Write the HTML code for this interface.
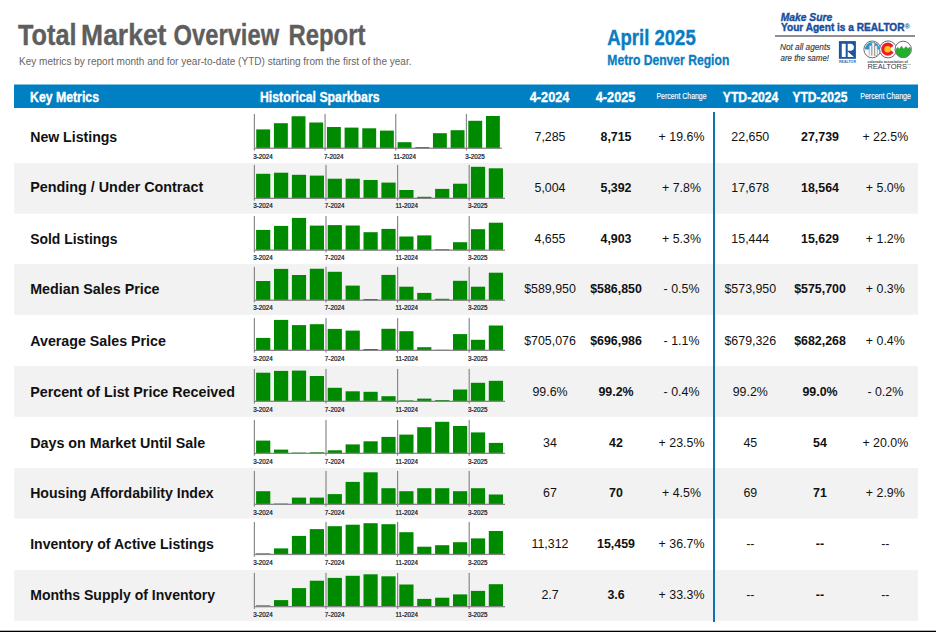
<!DOCTYPE html>
<html><head><meta charset="utf-8"><style>
html,body{margin:0;padding:0;background:#fff;}
body{width:936px;height:632px;overflow:hidden;position:relative;}
svg{position:absolute;left:0;top:0;font-family:"Liberation Sans", sans-serif;}
</style></head><body>
<svg width="936" height="632" viewBox="0 0 936 632">
<text x="17.99" y="45.1" font-size="29.8" fill="#5e5e5e" font-weight="bold" font-style="normal" text-anchor="start" textLength="58.56" lengthAdjust="spacingAndGlyphs" stroke="#5e5e5e" stroke-width="0.35">Total</text>
<text x="81.1" y="45.1" font-size="29.8" fill="#5e5e5e" font-weight="bold" font-style="normal" text-anchor="start" textLength="85.34" lengthAdjust="spacingAndGlyphs" stroke="#5e5e5e" stroke-width="0.35">Market</text>
<text x="173.6" y="45.1" font-size="29.8" fill="#5e5e5e" font-weight="bold" font-style="normal" text-anchor="start" textLength="105.48" lengthAdjust="spacingAndGlyphs" stroke="#5e5e5e" stroke-width="0.35">Overview</text>
<text x="288.47" y="45.1" font-size="29.8" fill="#5e5e5e" font-weight="bold" font-style="normal" text-anchor="start" textLength="76.94" lengthAdjust="spacingAndGlyphs" stroke="#5e5e5e" stroke-width="0.35">Report</text>
<text x="19" y="65.0" font-size="10" fill="#666666" font-weight="normal" font-style="normal" text-anchor="start" textLength="392.5" lengthAdjust="spacingAndGlyphs" >Key metrics by report month and for year-to-date (YTD) starting from the first of the year.</text>
<text x="607.2" y="44.7" font-size="22.8" fill="#0b7cc1" font-weight="bold" font-style="normal" text-anchor="start" textLength="88.5" lengthAdjust="spacingAndGlyphs" stroke="#0b7cc1" stroke-width="0.4">April 2025</text>
<text x="607.3" y="65.2" font-size="14.3" fill="#0b7cc1" font-weight="bold" font-style="normal" text-anchor="start" textLength="122" lengthAdjust="spacingAndGlyphs" stroke="#0b7cc1" stroke-width="0.3">Metro Denver Region</text>
<text x="780.7" y="20.8" font-size="10.8" fill="#184e9e" font-weight="bold" font-style="italic" text-anchor="start" textLength="51.5" lengthAdjust="spacingAndGlyphs" stroke="#184e9e" stroke-width="0.4">Make Sure</text>
<text x="781" y="30.6" font-size="10.2" fill="#184e9e" font-weight="bold" font-style="normal" text-anchor="start" textLength="123.5" lengthAdjust="spacingAndGlyphs" stroke="#184e9e" stroke-width="0.4">Your Agent is a REALTOR</text>
<text x="904.6" y="28.6" font-size="7.6" fill="#184e9e" font-weight="bold">®</text>
<rect x="775" y="35" width="140" height="2" fill="#8f8f8f"/>
<text x="780" y="49.7" font-size="8.2" fill="#3a3a3a" font-weight="normal" font-style="italic" text-anchor="start" textLength="50.3" lengthAdjust="spacingAndGlyphs" stroke="#3a3a3a" stroke-width="0.15">Not all agents</text>
<text x="780.5" y="61.2" font-size="8.2" fill="#3a3a3a" font-weight="normal" font-style="italic" text-anchor="start" textLength="48.5" lengthAdjust="spacingAndGlyphs" stroke="#3a3a3a" stroke-width="0.15">are the same!</text>
<rect x="838.9" y="41.1" width="17" height="17.7" fill="#1a55a0"/>
<path d="M841.75 43.8 h3.95 v13.25 h-3.95 z M847.7 43.8 H850.4 A3.5 3.5 0 0 1 850.4 50.8 H847.7 Z M847.7 51.4 L853.9 57.05 H847.7 Z" fill="#fff"/>
<text x="839" y="62.8" font-size="3.6" font-weight="bold" fill="#3a6ab0" textLength="17" lengthAdjust="spacingAndGlyphs">REALTOR</text>
<g>
<circle cx="872.3" cy="49.4" r="8.4" fill="#fff" stroke="#6a6a6a" stroke-width="1"/>
<path d="M865 49.4 A7.3 7.3 0 0 1 879.6 49.4 Z" fill="#2196d6"/>
<path d="M869.2 55.6 V45.5 h2.6 V55.6 M871.8 55.6 V42.6 h2.8 V55.6 M874.6 55.6 V45.8 h2.8 V55.6 z" fill="#f4f4f4" stroke="#888" stroke-width="0.6"/>
<circle cx="888.1" cy="49.4" r="8.5" fill="#fff" stroke="#6a6a6a" stroke-width="1"/>
<circle cx="887.8" cy="49.1" r="6.6" fill="#ec1c2c"/>
<path d="M889 49.1 L895.5 44.5 L895.5 53.7 z" fill="#fff"/>
<circle cx="887.6" cy="49.2" r="3.2" fill="#fcc60e"/>
<circle cx="903.2" cy="49.4" r="8.2" fill="#fff" stroke="#6a6a6a" stroke-width="1"/>
<path d="M895.6 49.6 L897.8 47.2 L899.4 48.9 L901.6 46.0 L903.6 48.9 L906 46.4 L908 48.6 L909.6 46.9 L910.9 48.9 L910.9 50 A7.7 7.7 0 0 1 895.5 50 Z" fill="#22b02c" stroke="#777" stroke-width="0.4"/>
</g>
<text x="867.4" y="62.6" font-size="3.2" font-weight="bold" fill="#444" textLength="40.5" lengthAdjust="spacingAndGlyphs">colorado association of</text>
<text x="867.4" y="68.9" font-size="6.4" fill="#3a3a3a" textLength="39.6" lengthAdjust="spacingAndGlyphs">REALTORS</text>
<text x="907.2" y="65" font-size="2.5" fill="#555">TM</text>
<rect x="14" y="84.5" width="904" height="23.5" fill="#0080c2"/>
<text x="30" y="101.6" font-size="15" fill="#fff" font-weight="bold" font-style="normal" text-anchor="start" textLength="69" lengthAdjust="spacingAndGlyphs" stroke="#fff" stroke-width="0.35">Key Metrics</text>
<text x="260" y="101.6" font-size="15" fill="#fff" font-weight="bold" font-style="normal" text-anchor="start" textLength="119.5" lengthAdjust="spacingAndGlyphs" stroke="#fff" stroke-width="0.35">Historical Sparkbars</text>
<text x="529.8" y="101.6" font-size="15" fill="#fff" font-weight="bold" font-style="normal" text-anchor="start" textLength="39.5" lengthAdjust="spacingAndGlyphs" stroke="#fff" stroke-width="0.35">4-2024</text>
<text x="595.8" y="101.6" font-size="15" fill="#fff" font-weight="bold" font-style="normal" text-anchor="start" textLength="39.5" lengthAdjust="spacingAndGlyphs" stroke="#fff" stroke-width="0.35">4-2025</text>
<text x="656.4" y="98.6" font-size="9.7" fill="#fff" font-weight="normal" font-style="normal" text-anchor="start" textLength="50.2" lengthAdjust="spacingAndGlyphs" stroke="#fff" stroke-width="0.15">Percent Change</text>
<text x="722.8" y="101.6" font-size="15" fill="#fff" font-weight="bold" font-style="normal" text-anchor="start" textLength="55.5" lengthAdjust="spacingAndGlyphs" stroke="#fff" stroke-width="0.35">YTD-2024</text>
<text x="792.4" y="101.6" font-size="15" fill="#fff" font-weight="bold" font-style="normal" text-anchor="start" textLength="55" lengthAdjust="spacingAndGlyphs" stroke="#fff" stroke-width="0.35">YTD-2025</text>
<text x="860.3" y="98.6" font-size="9.7" fill="#fff" font-weight="normal" font-style="normal" text-anchor="start" textLength="50.6" lengthAdjust="spacingAndGlyphs" stroke="#fff" stroke-width="0.15">Percent Change</text>
<rect x="14.2" y="163" width="903.8" height="50.7" fill="#f2f2f2"/>
<rect x="14.2" y="264.1" width="903.8" height="50.7" fill="#f2f2f2"/>
<rect x="14.2" y="366" width="903.8" height="50.8" fill="#f2f2f2"/>
<rect x="14.2" y="468" width="903.8" height="50.6" fill="#f2f2f2"/>
<rect x="14.2" y="570" width="903.8" height="50.8" fill="#f2f2f2"/>
<text x="30.2" y="141.7" font-size="14" fill="#111" font-weight="bold" font-style="normal" text-anchor="start" textLength="87.05" lengthAdjust="spacingAndGlyphs" >New Listings</text>
<text x="550" y="141.0" font-size="12.4" fill="#111" font-weight="normal" font-style="normal" text-anchor="middle" >7,285</text>
<text x="616" y="141.0" font-size="12.4" fill="#111" font-weight="bold" font-style="normal" text-anchor="middle" >8,715</text>
<text x="681.5" y="141.0" font-size="12.4" fill="#111" font-weight="normal" font-style="normal" text-anchor="middle" >+ 19.6%</text>
<text x="750.3" y="141.0" font-size="12.4" fill="#111" font-weight="normal" font-style="normal" text-anchor="middle" >22,650</text>
<text x="820" y="141.0" font-size="12.4" fill="#111" font-weight="bold" font-style="normal" text-anchor="middle" >27,739</text>
<text x="885.3" y="141.0" font-size="12.4" fill="#111" font-weight="normal" font-style="normal" text-anchor="middle" >+ 22.5%</text>
<rect x="256.25" y="129.40" width="13.90" height="18.90" fill="#008a00"/>
<rect x="273.92" y="123.20" width="13.90" height="25.10" fill="#008a00"/>
<rect x="291.59" y="116.25" width="13.90" height="32.05" fill="#008a00"/>
<rect x="309.26" y="122.50" width="13.90" height="25.80" fill="#008a00"/>
<rect x="326.93" y="127.00" width="13.90" height="21.30" fill="#008a00"/>
<rect x="344.60" y="127.60" width="13.90" height="20.70" fill="#008a00"/>
<rect x="362.27" y="128.30" width="13.90" height="20.00" fill="#008a00"/>
<rect x="379.94" y="130.60" width="13.90" height="17.70" fill="#008a00"/>
<rect x="397.61" y="142.20" width="13.90" height="6.10" fill="#008a00"/>
<rect x="415.28" y="147.10" width="13.90" height="1.20" fill="#008a00"/>
<rect x="432.95" y="133.20" width="13.90" height="15.10" fill="#008a00"/>
<rect x="450.62" y="130.20" width="13.90" height="18.10" fill="#008a00"/>
<rect x="468.29" y="120.80" width="13.90" height="27.50" fill="#008a00"/>
<rect x="485.96" y="116.00" width="13.90" height="32.30" fill="#008a00"/>
<rect x="253.90" y="147.60" width="247.88" height="1.3" fill="#858585"/>
<rect x="253.80" y="113.90" width="1.2" height="36.60" fill="#8a8a8a"/>
<rect x="324.48" y="113.90" width="1.2" height="36.60" fill="#8a8a8a"/>
<rect x="395.16" y="113.90" width="1.2" height="36.60" fill="#8a8a8a"/>
<rect x="465.84" y="113.90" width="1.2" height="36.60" fill="#8a8a8a"/>
<text x="253.20" y="158.70" font-size="6.6" fill="#15151f" stroke="#15151f" stroke-width="0.22" textLength="19.6" lengthAdjust="spacingAndGlyphs">3-2024</text>
<text x="323.88" y="158.70" font-size="6.6" fill="#15151f" stroke="#15151f" stroke-width="0.22" textLength="19.6" lengthAdjust="spacingAndGlyphs">7-2024</text>
<text x="393.56" y="158.70" font-size="6.6" fill="#15151f" stroke="#15151f" stroke-width="0.22" textLength="22.5" lengthAdjust="spacingAndGlyphs">11-2024</text>
<text x="465.24" y="158.70" font-size="6.6" fill="#15151f" stroke="#15151f" stroke-width="0.22" textLength="19.6" lengthAdjust="spacingAndGlyphs">3-2025</text>
<text x="30.2" y="192.4" font-size="14" fill="#111" font-weight="bold" font-style="normal" text-anchor="start" textLength="173.02" lengthAdjust="spacingAndGlyphs" >Pending / Under Contract</text>
<text x="550" y="191.70000000000002" font-size="12.4" fill="#111" font-weight="normal" font-style="normal" text-anchor="middle" >5,004</text>
<text x="616" y="191.70000000000002" font-size="12.4" fill="#111" font-weight="bold" font-style="normal" text-anchor="middle" >5,392</text>
<text x="681.5" y="191.70000000000002" font-size="12.4" fill="#111" font-weight="normal" font-style="normal" text-anchor="middle" >+ 7.8%</text>
<text x="750.3" y="191.70000000000002" font-size="12.4" fill="#111" font-weight="normal" font-style="normal" text-anchor="middle" >17,678</text>
<text x="820" y="191.70000000000002" font-size="12.4" fill="#111" font-weight="bold" font-style="normal" text-anchor="middle" >18,564</text>
<text x="885.3" y="191.70000000000002" font-size="12.4" fill="#111" font-weight="normal" font-style="normal" text-anchor="middle" >+ 5.0%</text>
<rect x="256.10" y="173.80" width="14.20" height="24.60" fill="#008a00"/>
<rect x="274.00" y="172.70" width="14.20" height="25.70" fill="#008a00"/>
<rect x="291.90" y="174.80" width="14.20" height="23.60" fill="#008a00"/>
<rect x="309.80" y="175.60" width="14.20" height="22.80" fill="#008a00"/>
<rect x="327.70" y="178.70" width="14.20" height="19.70" fill="#008a00"/>
<rect x="345.60" y="178.70" width="14.20" height="19.70" fill="#008a00"/>
<rect x="363.50" y="180.00" width="14.20" height="18.40" fill="#008a00"/>
<rect x="381.40" y="182.60" width="14.20" height="15.80" fill="#008a00"/>
<rect x="399.30" y="190.00" width="14.20" height="8.40" fill="#008a00"/>
<rect x="417.20" y="196.80" width="14.20" height="1.60" fill="#008a00"/>
<rect x="435.10" y="188.90" width="14.20" height="9.50" fill="#008a00"/>
<rect x="453.00" y="183.70" width="14.20" height="14.70" fill="#008a00"/>
<rect x="470.90" y="166.80" width="14.20" height="31.60" fill="#008a00"/>
<rect x="488.80" y="168.30" width="14.20" height="30.10" fill="#008a00"/>
<rect x="253.90" y="197.70" width="251.10" height="1.3" fill="#858585"/>
<rect x="253.80" y="164.90" width="1.2" height="35.70" fill="#8a8a8a"/>
<rect x="325.40" y="164.90" width="1.2" height="35.70" fill="#8a8a8a"/>
<rect x="397.00" y="164.90" width="1.2" height="35.70" fill="#8a8a8a"/>
<rect x="468.60" y="164.90" width="1.2" height="35.70" fill="#8a8a8a"/>
<text x="253.20" y="207.60" font-size="6.6" fill="#15151f" stroke="#15151f" stroke-width="0.22" textLength="19.6" lengthAdjust="spacingAndGlyphs">3-2024</text>
<text x="324.80" y="207.60" font-size="6.6" fill="#15151f" stroke="#15151f" stroke-width="0.22" textLength="19.6" lengthAdjust="spacingAndGlyphs">7-2024</text>
<text x="395.40" y="207.60" font-size="6.6" fill="#15151f" stroke="#15151f" stroke-width="0.22" textLength="22.5" lengthAdjust="spacingAndGlyphs">11-2024</text>
<text x="468.00" y="207.60" font-size="6.6" fill="#15151f" stroke="#15151f" stroke-width="0.22" textLength="19.6" lengthAdjust="spacingAndGlyphs">3-2025</text>
<text x="30.2" y="243.5" font-size="14" fill="#111" font-weight="bold" font-style="normal" text-anchor="start" textLength="87.27" lengthAdjust="spacingAndGlyphs" >Sold Listings</text>
<text x="550" y="242.8" font-size="12.4" fill="#111" font-weight="normal" font-style="normal" text-anchor="middle" >4,655</text>
<text x="616" y="242.8" font-size="12.4" fill="#111" font-weight="bold" font-style="normal" text-anchor="middle" >4,903</text>
<text x="681.5" y="242.8" font-size="12.4" fill="#111" font-weight="normal" font-style="normal" text-anchor="middle" >+ 5.3%</text>
<text x="750.3" y="242.8" font-size="12.4" fill="#111" font-weight="normal" font-style="normal" text-anchor="middle" >15,444</text>
<text x="820" y="242.8" font-size="12.4" fill="#111" font-weight="bold" font-style="normal" text-anchor="middle" >15,629</text>
<text x="885.3" y="242.8" font-size="12.4" fill="#111" font-weight="normal" font-style="normal" text-anchor="middle" >+ 1.2%</text>
<rect x="256.10" y="229.90" width="14.20" height="20.30" fill="#008a00"/>
<rect x="274.00" y="225.90" width="14.20" height="24.30" fill="#008a00"/>
<rect x="291.90" y="217.90" width="14.20" height="32.30" fill="#008a00"/>
<rect x="309.80" y="225.60" width="14.20" height="24.60" fill="#008a00"/>
<rect x="327.70" y="225.10" width="14.20" height="25.10" fill="#008a00"/>
<rect x="345.60" y="225.50" width="14.20" height="24.70" fill="#008a00"/>
<rect x="363.50" y="232.20" width="14.20" height="18.00" fill="#008a00"/>
<rect x="381.40" y="228.90" width="14.20" height="21.30" fill="#008a00"/>
<rect x="399.30" y="236.50" width="14.20" height="13.70" fill="#008a00"/>
<rect x="417.20" y="235.40" width="14.20" height="14.80" fill="#008a00"/>
<rect x="435.10" y="249.20" width="14.20" height="1.00" fill="#008a00"/>
<rect x="453.00" y="242.20" width="14.20" height="8.00" fill="#008a00"/>
<rect x="470.90" y="229.20" width="14.20" height="21.00" fill="#008a00"/>
<rect x="488.80" y="222.70" width="14.20" height="27.50" fill="#008a00"/>
<rect x="253.90" y="249.50" width="251.10" height="1.3" fill="#858585"/>
<rect x="253.80" y="215.90" width="1.2" height="36.50" fill="#8a8a8a"/>
<rect x="325.40" y="215.90" width="1.2" height="36.50" fill="#8a8a8a"/>
<rect x="397.00" y="215.90" width="1.2" height="36.50" fill="#8a8a8a"/>
<rect x="468.60" y="215.90" width="1.2" height="36.50" fill="#8a8a8a"/>
<text x="253.20" y="259.70" font-size="6.6" fill="#15151f" stroke="#15151f" stroke-width="0.22" textLength="19.6" lengthAdjust="spacingAndGlyphs">3-2024</text>
<text x="324.80" y="259.70" font-size="6.6" fill="#15151f" stroke="#15151f" stroke-width="0.22" textLength="19.6" lengthAdjust="spacingAndGlyphs">7-2024</text>
<text x="395.40" y="259.70" font-size="6.6" fill="#15151f" stroke="#15151f" stroke-width="0.22" textLength="22.5" lengthAdjust="spacingAndGlyphs">11-2024</text>
<text x="468.00" y="259.70" font-size="6.6" fill="#15151f" stroke="#15151f" stroke-width="0.22" textLength="19.6" lengthAdjust="spacingAndGlyphs">3-2025</text>
<text x="30.2" y="294.1" font-size="14" fill="#111" font-weight="bold" font-style="normal" text-anchor="start" textLength="129.38" lengthAdjust="spacingAndGlyphs" >Median Sales Price</text>
<text x="550" y="293.40000000000003" font-size="12.4" fill="#111" font-weight="normal" font-style="normal" text-anchor="middle" >$589,950</text>
<text x="616" y="293.40000000000003" font-size="12.4" fill="#111" font-weight="bold" font-style="normal" text-anchor="middle" >$586,850</text>
<text x="681.5" y="293.40000000000003" font-size="12.4" fill="#111" font-weight="normal" font-style="normal" text-anchor="middle" >- 0.5%</text>
<text x="750.3" y="293.40000000000003" font-size="12.4" fill="#111" font-weight="normal" font-style="normal" text-anchor="middle" >$573,950</text>
<text x="820" y="293.40000000000003" font-size="12.4" fill="#111" font-weight="bold" font-style="normal" text-anchor="middle" >$575,700</text>
<text x="885.3" y="293.40000000000003" font-size="12.4" fill="#111" font-weight="normal" font-style="normal" text-anchor="middle" >+ 0.3%</text>
<rect x="256.10" y="281.00" width="14.20" height="19.30" fill="#008a00"/>
<rect x="274.00" y="268.90" width="14.20" height="31.40" fill="#008a00"/>
<rect x="291.90" y="275.00" width="14.20" height="25.30" fill="#008a00"/>
<rect x="309.80" y="268.75" width="14.20" height="31.55" fill="#008a00"/>
<rect x="327.70" y="271.80" width="14.20" height="28.50" fill="#008a00"/>
<rect x="345.60" y="285.60" width="14.20" height="14.70" fill="#008a00"/>
<rect x="363.50" y="299.00" width="14.20" height="1.30" fill="#008a00"/>
<rect x="381.40" y="274.90" width="14.20" height="25.40" fill="#008a00"/>
<rect x="399.30" y="286.70" width="14.20" height="13.60" fill="#008a00"/>
<rect x="417.20" y="292.90" width="14.20" height="7.40" fill="#008a00"/>
<rect x="435.10" y="298.80" width="14.20" height="1.50" fill="#008a00"/>
<rect x="453.00" y="280.80" width="14.20" height="19.50" fill="#008a00"/>
<rect x="470.90" y="286.70" width="14.20" height="13.60" fill="#008a00"/>
<rect x="488.80" y="272.70" width="14.20" height="27.60" fill="#008a00"/>
<rect x="253.90" y="299.60" width="251.10" height="1.3" fill="#858585"/>
<rect x="253.80" y="266.90" width="1.2" height="35.60" fill="#8a8a8a"/>
<rect x="325.40" y="266.90" width="1.2" height="35.60" fill="#8a8a8a"/>
<rect x="397.00" y="266.90" width="1.2" height="35.60" fill="#8a8a8a"/>
<rect x="468.60" y="266.90" width="1.2" height="35.60" fill="#8a8a8a"/>
<text x="253.20" y="309.60" font-size="6.6" fill="#15151f" stroke="#15151f" stroke-width="0.22" textLength="19.6" lengthAdjust="spacingAndGlyphs">3-2024</text>
<text x="324.80" y="309.60" font-size="6.6" fill="#15151f" stroke="#15151f" stroke-width="0.22" textLength="19.6" lengthAdjust="spacingAndGlyphs">7-2024</text>
<text x="395.40" y="309.60" font-size="6.6" fill="#15151f" stroke="#15151f" stroke-width="0.22" textLength="22.5" lengthAdjust="spacingAndGlyphs">11-2024</text>
<text x="468.00" y="309.60" font-size="6.6" fill="#15151f" stroke="#15151f" stroke-width="0.22" textLength="19.6" lengthAdjust="spacingAndGlyphs">3-2025</text>
<text x="30.2" y="345.5" font-size="14" fill="#111" font-weight="bold" font-style="normal" text-anchor="start" textLength="135.76" lengthAdjust="spacingAndGlyphs" >Average Sales Price</text>
<text x="550" y="344.8" font-size="12.4" fill="#111" font-weight="normal" font-style="normal" text-anchor="middle" >$705,076</text>
<text x="616" y="344.8" font-size="12.4" fill="#111" font-weight="bold" font-style="normal" text-anchor="middle" >$696,986</text>
<text x="681.5" y="344.8" font-size="12.4" fill="#111" font-weight="normal" font-style="normal" text-anchor="middle" >- 1.1%</text>
<text x="750.3" y="344.8" font-size="12.4" fill="#111" font-weight="normal" font-style="normal" text-anchor="middle" >$679,326</text>
<text x="820" y="344.8" font-size="12.4" fill="#111" font-weight="bold" font-style="normal" text-anchor="middle" >$682,268</text>
<text x="885.3" y="344.8" font-size="12.4" fill="#111" font-weight="normal" font-style="normal" text-anchor="middle" >+ 0.4%</text>
<rect x="256.10" y="337.90" width="14.20" height="12.50" fill="#008a00"/>
<rect x="274.00" y="319.90" width="14.20" height="30.50" fill="#008a00"/>
<rect x="291.90" y="325.10" width="14.20" height="25.30" fill="#008a00"/>
<rect x="309.80" y="324.20" width="14.20" height="26.20" fill="#008a00"/>
<rect x="327.70" y="328.90" width="14.20" height="21.50" fill="#008a00"/>
<rect x="345.60" y="330.60" width="14.20" height="19.80" fill="#008a00"/>
<rect x="363.50" y="349.00" width="14.20" height="1.40" fill="#008a00"/>
<rect x="381.40" y="328.80" width="14.20" height="21.60" fill="#008a00"/>
<rect x="399.30" y="331.20" width="14.20" height="19.20" fill="#008a00"/>
<rect x="417.20" y="347.20" width="14.20" height="3.20" fill="#008a00"/>
<rect x="435.10" y="349.80" width="14.20" height="0.60" fill="#008a00"/>
<rect x="453.00" y="334.10" width="14.20" height="16.30" fill="#008a00"/>
<rect x="470.90" y="339.80" width="14.20" height="10.60" fill="#008a00"/>
<rect x="488.80" y="325.50" width="14.20" height="24.90" fill="#008a00"/>
<rect x="253.90" y="349.70" width="251.10" height="1.3" fill="#858585"/>
<rect x="253.80" y="318.00" width="1.2" height="34.60" fill="#8a8a8a"/>
<rect x="325.40" y="318.00" width="1.2" height="34.60" fill="#8a8a8a"/>
<rect x="397.00" y="318.00" width="1.2" height="34.60" fill="#8a8a8a"/>
<rect x="468.60" y="318.00" width="1.2" height="34.60" fill="#8a8a8a"/>
<text x="253.20" y="360.90" font-size="6.6" fill="#15151f" stroke="#15151f" stroke-width="0.22" textLength="19.6" lengthAdjust="spacingAndGlyphs">3-2024</text>
<text x="324.80" y="360.90" font-size="6.6" fill="#15151f" stroke="#15151f" stroke-width="0.22" textLength="19.6" lengthAdjust="spacingAndGlyphs">7-2024</text>
<text x="395.40" y="360.90" font-size="6.6" fill="#15151f" stroke="#15151f" stroke-width="0.22" textLength="22.5" lengthAdjust="spacingAndGlyphs">11-2024</text>
<text x="468.00" y="360.90" font-size="6.6" fill="#15151f" stroke="#15151f" stroke-width="0.22" textLength="19.6" lengthAdjust="spacingAndGlyphs">3-2025</text>
<text x="30.2" y="396.7" font-size="14" fill="#111" font-weight="bold" font-style="normal" text-anchor="start" textLength="204.79" lengthAdjust="spacingAndGlyphs" >Percent of List Price Received</text>
<text x="550" y="396.0" font-size="12.4" fill="#111" font-weight="normal" font-style="normal" text-anchor="middle" >99.6%</text>
<text x="616" y="396.0" font-size="12.4" fill="#111" font-weight="bold" font-style="normal" text-anchor="middle" >99.2%</text>
<text x="681.5" y="396.0" font-size="12.4" fill="#111" font-weight="normal" font-style="normal" text-anchor="middle" >- 0.4%</text>
<text x="750.3" y="396.0" font-size="12.4" fill="#111" font-weight="normal" font-style="normal" text-anchor="middle" >99.2%</text>
<text x="820" y="396.0" font-size="12.4" fill="#111" font-weight="bold" font-style="normal" text-anchor="middle" >99.0%</text>
<text x="885.3" y="396.0" font-size="12.4" fill="#111" font-weight="normal" font-style="normal" text-anchor="middle" >- 0.2%</text>
<rect x="256.10" y="372.70" width="14.20" height="28.70" fill="#008a00"/>
<rect x="274.00" y="370.90" width="14.20" height="30.50" fill="#008a00"/>
<rect x="291.90" y="370.60" width="14.20" height="30.80" fill="#008a00"/>
<rect x="309.80" y="376.00" width="14.20" height="25.40" fill="#008a00"/>
<rect x="327.70" y="387.80" width="14.20" height="13.60" fill="#008a00"/>
<rect x="345.60" y="391.30" width="14.20" height="10.10" fill="#008a00"/>
<rect x="363.50" y="391.80" width="14.20" height="9.60" fill="#008a00"/>
<rect x="381.40" y="396.20" width="14.20" height="5.20" fill="#008a00"/>
<rect x="399.30" y="400.40" width="14.20" height="1.00" fill="#008a00"/>
<rect x="417.20" y="398.60" width="14.20" height="2.80" fill="#008a00"/>
<rect x="435.10" y="400.10" width="14.20" height="1.30" fill="#008a00"/>
<rect x="453.00" y="389.50" width="14.20" height="11.90" fill="#008a00"/>
<rect x="470.90" y="382.80" width="14.20" height="18.60" fill="#008a00"/>
<rect x="488.80" y="380.80" width="14.20" height="20.60" fill="#008a00"/>
<rect x="253.90" y="400.70" width="251.10" height="1.3" fill="#858585"/>
<rect x="253.80" y="368.90" width="1.2" height="34.70" fill="#8a8a8a"/>
<rect x="325.40" y="368.90" width="1.2" height="34.70" fill="#8a8a8a"/>
<rect x="397.00" y="368.90" width="1.2" height="34.70" fill="#8a8a8a"/>
<rect x="468.60" y="368.90" width="1.2" height="34.70" fill="#8a8a8a"/>
<text x="253.20" y="411.60" font-size="6.6" fill="#15151f" stroke="#15151f" stroke-width="0.22" textLength="19.6" lengthAdjust="spacingAndGlyphs">3-2024</text>
<text x="324.80" y="411.60" font-size="6.6" fill="#15151f" stroke="#15151f" stroke-width="0.22" textLength="19.6" lengthAdjust="spacingAndGlyphs">7-2024</text>
<text x="395.40" y="411.60" font-size="6.6" fill="#15151f" stroke="#15151f" stroke-width="0.22" textLength="22.5" lengthAdjust="spacingAndGlyphs">11-2024</text>
<text x="468.00" y="411.60" font-size="6.6" fill="#15151f" stroke="#15151f" stroke-width="0.22" textLength="19.6" lengthAdjust="spacingAndGlyphs">3-2025</text>
<text x="30.2" y="447.7" font-size="14" fill="#111" font-weight="bold" font-style="normal" text-anchor="start" textLength="174.94" lengthAdjust="spacingAndGlyphs" >Days on Market Until Sale</text>
<text x="550" y="447.0" font-size="12.4" fill="#111" font-weight="normal" font-style="normal" text-anchor="middle" >34</text>
<text x="616" y="447.0" font-size="12.4" fill="#111" font-weight="bold" font-style="normal" text-anchor="middle" >42</text>
<text x="681.5" y="447.0" font-size="12.4" fill="#111" font-weight="normal" font-style="normal" text-anchor="middle" >+ 23.5%</text>
<text x="750.3" y="447.0" font-size="12.4" fill="#111" font-weight="normal" font-style="normal" text-anchor="middle" >45</text>
<text x="820" y="447.0" font-size="12.4" fill="#111" font-weight="bold" font-style="normal" text-anchor="middle" >54</text>
<text x="885.3" y="447.0" font-size="12.4" fill="#111" font-weight="normal" font-style="normal" text-anchor="middle" >+ 20.0%</text>
<rect x="256.10" y="440.60" width="14.20" height="12.80" fill="#008a00"/>
<rect x="274.00" y="449.60" width="14.20" height="3.80" fill="#008a00"/>
<rect x="291.90" y="452.60" width="14.20" height="0.80" fill="#008a00"/>
<rect x="309.80" y="452.30" width="14.20" height="1.10" fill="#008a00"/>
<rect x="327.70" y="450.30" width="14.20" height="3.10" fill="#008a00"/>
<rect x="345.60" y="444.40" width="14.20" height="9.00" fill="#008a00"/>
<rect x="363.50" y="441.30" width="14.20" height="12.10" fill="#008a00"/>
<rect x="381.40" y="436.90" width="14.20" height="16.50" fill="#008a00"/>
<rect x="399.30" y="434.60" width="14.20" height="18.80" fill="#008a00"/>
<rect x="417.20" y="427.20" width="14.20" height="26.20" fill="#008a00"/>
<rect x="435.10" y="421.80" width="14.20" height="31.60" fill="#008a00"/>
<rect x="453.00" y="426.00" width="14.20" height="27.40" fill="#008a00"/>
<rect x="470.90" y="432.40" width="14.20" height="21.00" fill="#008a00"/>
<rect x="488.80" y="442.90" width="14.20" height="10.50" fill="#008a00"/>
<rect x="253.90" y="452.70" width="251.10" height="1.3" fill="#858585"/>
<rect x="253.80" y="419.90" width="1.2" height="35.70" fill="#8a8a8a"/>
<rect x="325.40" y="419.90" width="1.2" height="35.70" fill="#8a8a8a"/>
<rect x="397.00" y="419.90" width="1.2" height="35.70" fill="#8a8a8a"/>
<rect x="468.60" y="419.90" width="1.2" height="35.70" fill="#8a8a8a"/>
<text x="253.20" y="463.70" font-size="6.6" fill="#15151f" stroke="#15151f" stroke-width="0.22" textLength="19.6" lengthAdjust="spacingAndGlyphs">3-2024</text>
<text x="324.80" y="463.70" font-size="6.6" fill="#15151f" stroke="#15151f" stroke-width="0.22" textLength="19.6" lengthAdjust="spacingAndGlyphs">7-2024</text>
<text x="395.40" y="463.70" font-size="6.6" fill="#15151f" stroke="#15151f" stroke-width="0.22" textLength="22.5" lengthAdjust="spacingAndGlyphs">11-2024</text>
<text x="468.00" y="463.70" font-size="6.6" fill="#15151f" stroke="#15151f" stroke-width="0.22" textLength="19.6" lengthAdjust="spacingAndGlyphs">3-2025</text>
<text x="30.2" y="497.9" font-size="14" fill="#111" font-weight="bold" font-style="normal" text-anchor="start" textLength="183.36" lengthAdjust="spacingAndGlyphs" >Housing Affordability Index</text>
<text x="550" y="497.2" font-size="12.4" fill="#111" font-weight="normal" font-style="normal" text-anchor="middle" >67</text>
<text x="616" y="497.2" font-size="12.4" fill="#111" font-weight="bold" font-style="normal" text-anchor="middle" >70</text>
<text x="681.5" y="497.2" font-size="12.4" fill="#111" font-weight="normal" font-style="normal" text-anchor="middle" >+ 4.5%</text>
<text x="750.3" y="497.2" font-size="12.4" fill="#111" font-weight="normal" font-style="normal" text-anchor="middle" >69</text>
<text x="820" y="497.2" font-size="12.4" fill="#111" font-weight="bold" font-style="normal" text-anchor="middle" >71</text>
<text x="885.3" y="497.2" font-size="12.4" fill="#111" font-weight="normal" font-style="normal" text-anchor="middle" >+ 2.9%</text>
<rect x="256.10" y="491.20" width="14.20" height="13.20" fill="#008a00"/>
<rect x="274.00" y="503.60" width="14.20" height="0.80" fill="#008a00"/>
<rect x="291.90" y="497.60" width="14.20" height="6.80" fill="#008a00"/>
<rect x="309.80" y="497.60" width="14.20" height="6.80" fill="#008a00"/>
<rect x="327.70" y="494.10" width="14.20" height="10.30" fill="#008a00"/>
<rect x="345.60" y="481.90" width="14.20" height="22.50" fill="#008a00"/>
<rect x="363.50" y="472.30" width="14.20" height="32.10" fill="#008a00"/>
<rect x="381.40" y="488.20" width="14.20" height="16.20" fill="#008a00"/>
<rect x="399.30" y="491.20" width="14.20" height="13.20" fill="#008a00"/>
<rect x="417.20" y="488.20" width="14.20" height="16.20" fill="#008a00"/>
<rect x="435.10" y="488.20" width="14.20" height="16.20" fill="#008a00"/>
<rect x="453.00" y="491.20" width="14.20" height="13.20" fill="#008a00"/>
<rect x="470.90" y="488.20" width="14.20" height="16.20" fill="#008a00"/>
<rect x="488.80" y="494.50" width="14.20" height="9.90" fill="#008a00"/>
<rect x="253.90" y="503.70" width="251.10" height="1.3" fill="#858585"/>
<rect x="253.80" y="470.90" width="1.2" height="35.70" fill="#8a8a8a"/>
<rect x="325.40" y="470.90" width="1.2" height="35.70" fill="#8a8a8a"/>
<rect x="397.00" y="470.90" width="1.2" height="35.70" fill="#8a8a8a"/>
<rect x="468.60" y="470.90" width="1.2" height="35.70" fill="#8a8a8a"/>
<text x="253.20" y="514.70" font-size="6.6" fill="#15151f" stroke="#15151f" stroke-width="0.22" textLength="19.6" lengthAdjust="spacingAndGlyphs">3-2024</text>
<text x="324.80" y="514.70" font-size="6.6" fill="#15151f" stroke="#15151f" stroke-width="0.22" textLength="19.6" lengthAdjust="spacingAndGlyphs">7-2024</text>
<text x="395.40" y="514.70" font-size="6.6" fill="#15151f" stroke="#15151f" stroke-width="0.22" textLength="22.5" lengthAdjust="spacingAndGlyphs">11-2024</text>
<text x="468.00" y="514.70" font-size="6.6" fill="#15151f" stroke="#15151f" stroke-width="0.22" textLength="19.6" lengthAdjust="spacingAndGlyphs">3-2025</text>
<text x="30.2" y="548.9" font-size="14" fill="#111" font-weight="bold" font-style="normal" text-anchor="start" textLength="183.63" lengthAdjust="spacingAndGlyphs" >Inventory of Active Listings</text>
<text x="550" y="548.1999999999999" font-size="12.4" fill="#111" font-weight="normal" font-style="normal" text-anchor="middle" >11,312</text>
<text x="616" y="548.1999999999999" font-size="12.4" fill="#111" font-weight="bold" font-style="normal" text-anchor="middle" >15,459</text>
<text x="681.5" y="548.1999999999999" font-size="12.4" fill="#111" font-weight="normal" font-style="normal" text-anchor="middle" >+ 36.7%</text>
<text x="750.3" y="548.1999999999999" font-size="12.4" fill="#111" font-weight="normal" font-style="normal" text-anchor="middle" >--</text>
<text x="820" y="548.1999999999999" font-size="12.4" fill="#111" font-weight="bold" font-style="normal" text-anchor="middle" >--</text>
<text x="885.3" y="548.1999999999999" font-size="12.4" fill="#111" font-weight="normal" font-style="normal" text-anchor="middle" >--</text>
<rect x="256.10" y="553.40" width="14.20" height="1.10" fill="#008a00"/>
<rect x="274.00" y="548.40" width="14.20" height="6.10" fill="#008a00"/>
<rect x="291.90" y="535.90" width="14.20" height="18.60" fill="#008a00"/>
<rect x="309.80" y="529.10" width="14.20" height="25.40" fill="#008a00"/>
<rect x="327.70" y="526.20" width="14.20" height="28.30" fill="#008a00"/>
<rect x="345.60" y="524.70" width="14.20" height="29.80" fill="#008a00"/>
<rect x="363.50" y="523.20" width="14.20" height="31.30" fill="#008a00"/>
<rect x="381.40" y="524.20" width="14.20" height="30.30" fill="#008a00"/>
<rect x="399.30" y="532.20" width="14.20" height="22.30" fill="#008a00"/>
<rect x="417.20" y="546.70" width="14.20" height="7.80" fill="#008a00"/>
<rect x="435.10" y="545.20" width="14.20" height="9.30" fill="#008a00"/>
<rect x="453.00" y="542.20" width="14.20" height="12.30" fill="#008a00"/>
<rect x="470.90" y="538.40" width="14.20" height="16.10" fill="#008a00"/>
<rect x="488.80" y="531.00" width="14.20" height="23.50" fill="#008a00"/>
<rect x="253.90" y="553.80" width="251.10" height="1.3" fill="#858585"/>
<rect x="253.80" y="521.90" width="1.2" height="34.80" fill="#8a8a8a"/>
<rect x="325.40" y="521.90" width="1.2" height="34.80" fill="#8a8a8a"/>
<rect x="397.00" y="521.90" width="1.2" height="34.80" fill="#8a8a8a"/>
<rect x="468.60" y="521.90" width="1.2" height="34.80" fill="#8a8a8a"/>
<text x="253.20" y="564.80" font-size="6.6" fill="#15151f" stroke="#15151f" stroke-width="0.22" textLength="19.6" lengthAdjust="spacingAndGlyphs">3-2024</text>
<text x="324.80" y="564.80" font-size="6.6" fill="#15151f" stroke="#15151f" stroke-width="0.22" textLength="19.6" lengthAdjust="spacingAndGlyphs">7-2024</text>
<text x="395.40" y="564.80" font-size="6.6" fill="#15151f" stroke="#15151f" stroke-width="0.22" textLength="22.5" lengthAdjust="spacingAndGlyphs">11-2024</text>
<text x="468.00" y="564.80" font-size="6.6" fill="#15151f" stroke="#15151f" stroke-width="0.22" textLength="19.6" lengthAdjust="spacingAndGlyphs">3-2025</text>
<text x="30.2" y="599.5" font-size="14" fill="#111" font-weight="bold" font-style="normal" text-anchor="start" textLength="184.89" lengthAdjust="spacingAndGlyphs" >Months Supply of Inventory</text>
<text x="550" y="598.8" font-size="12.4" fill="#111" font-weight="normal" font-style="normal" text-anchor="middle" >2.7</text>
<text x="616" y="598.8" font-size="12.4" fill="#111" font-weight="bold" font-style="normal" text-anchor="middle" >3.6</text>
<text x="681.5" y="598.8" font-size="12.4" fill="#111" font-weight="normal" font-style="normal" text-anchor="middle" >+ 33.3%</text>
<text x="750.3" y="598.8" font-size="12.4" fill="#111" font-weight="normal" font-style="normal" text-anchor="middle" >--</text>
<text x="820" y="598.8" font-size="12.4" fill="#111" font-weight="bold" font-style="normal" text-anchor="middle" >--</text>
<text x="885.3" y="598.8" font-size="12.4" fill="#111" font-weight="normal" font-style="normal" text-anchor="middle" >--</text>
<rect x="256.10" y="605.40" width="14.20" height="1.30" fill="#008a00"/>
<rect x="274.00" y="600.10" width="14.20" height="6.60" fill="#008a00"/>
<rect x="291.90" y="588.10" width="14.20" height="18.60" fill="#008a00"/>
<rect x="309.80" y="580.70" width="14.20" height="26.00" fill="#008a00"/>
<rect x="327.70" y="577.90" width="14.20" height="28.80" fill="#008a00"/>
<rect x="345.60" y="575.80" width="14.20" height="30.90" fill="#008a00"/>
<rect x="363.50" y="574.30" width="14.20" height="32.40" fill="#008a00"/>
<rect x="381.40" y="576.30" width="14.20" height="30.40" fill="#008a00"/>
<rect x="399.30" y="584.50" width="14.20" height="22.20" fill="#008a00"/>
<rect x="417.20" y="598.90" width="14.20" height="7.80" fill="#008a00"/>
<rect x="435.10" y="597.70" width="14.20" height="9.00" fill="#008a00"/>
<rect x="453.00" y="594.40" width="14.20" height="12.30" fill="#008a00"/>
<rect x="470.90" y="590.90" width="14.20" height="15.80" fill="#008a00"/>
<rect x="488.80" y="584.20" width="14.20" height="22.50" fill="#008a00"/>
<rect x="253.90" y="606.00" width="251.10" height="1.3" fill="#858585"/>
<rect x="253.80" y="572.90" width="1.2" height="36.00" fill="#8a8a8a"/>
<rect x="325.40" y="572.90" width="1.2" height="36.00" fill="#8a8a8a"/>
<rect x="397.00" y="572.90" width="1.2" height="36.00" fill="#8a8a8a"/>
<rect x="468.60" y="572.90" width="1.2" height="36.00" fill="#8a8a8a"/>
<text x="253.20" y="616.70" font-size="6.6" fill="#15151f" stroke="#15151f" stroke-width="0.22" textLength="19.6" lengthAdjust="spacingAndGlyphs">3-2024</text>
<text x="324.80" y="616.70" font-size="6.6" fill="#15151f" stroke="#15151f" stroke-width="0.22" textLength="19.6" lengthAdjust="spacingAndGlyphs">7-2024</text>
<text x="395.40" y="616.70" font-size="6.6" fill="#15151f" stroke="#15151f" stroke-width="0.22" textLength="22.5" lengthAdjust="spacingAndGlyphs">11-2024</text>
<text x="468.00" y="616.70" font-size="6.6" fill="#15151f" stroke="#15151f" stroke-width="0.22" textLength="19.6" lengthAdjust="spacingAndGlyphs">3-2025</text>
<rect x="713" y="112" width="2" height="510" fill="#0a72b5"/>
<rect x="0" y="630.7" width="936" height="1.3" fill="#000"/>
</svg>
</body></html>
